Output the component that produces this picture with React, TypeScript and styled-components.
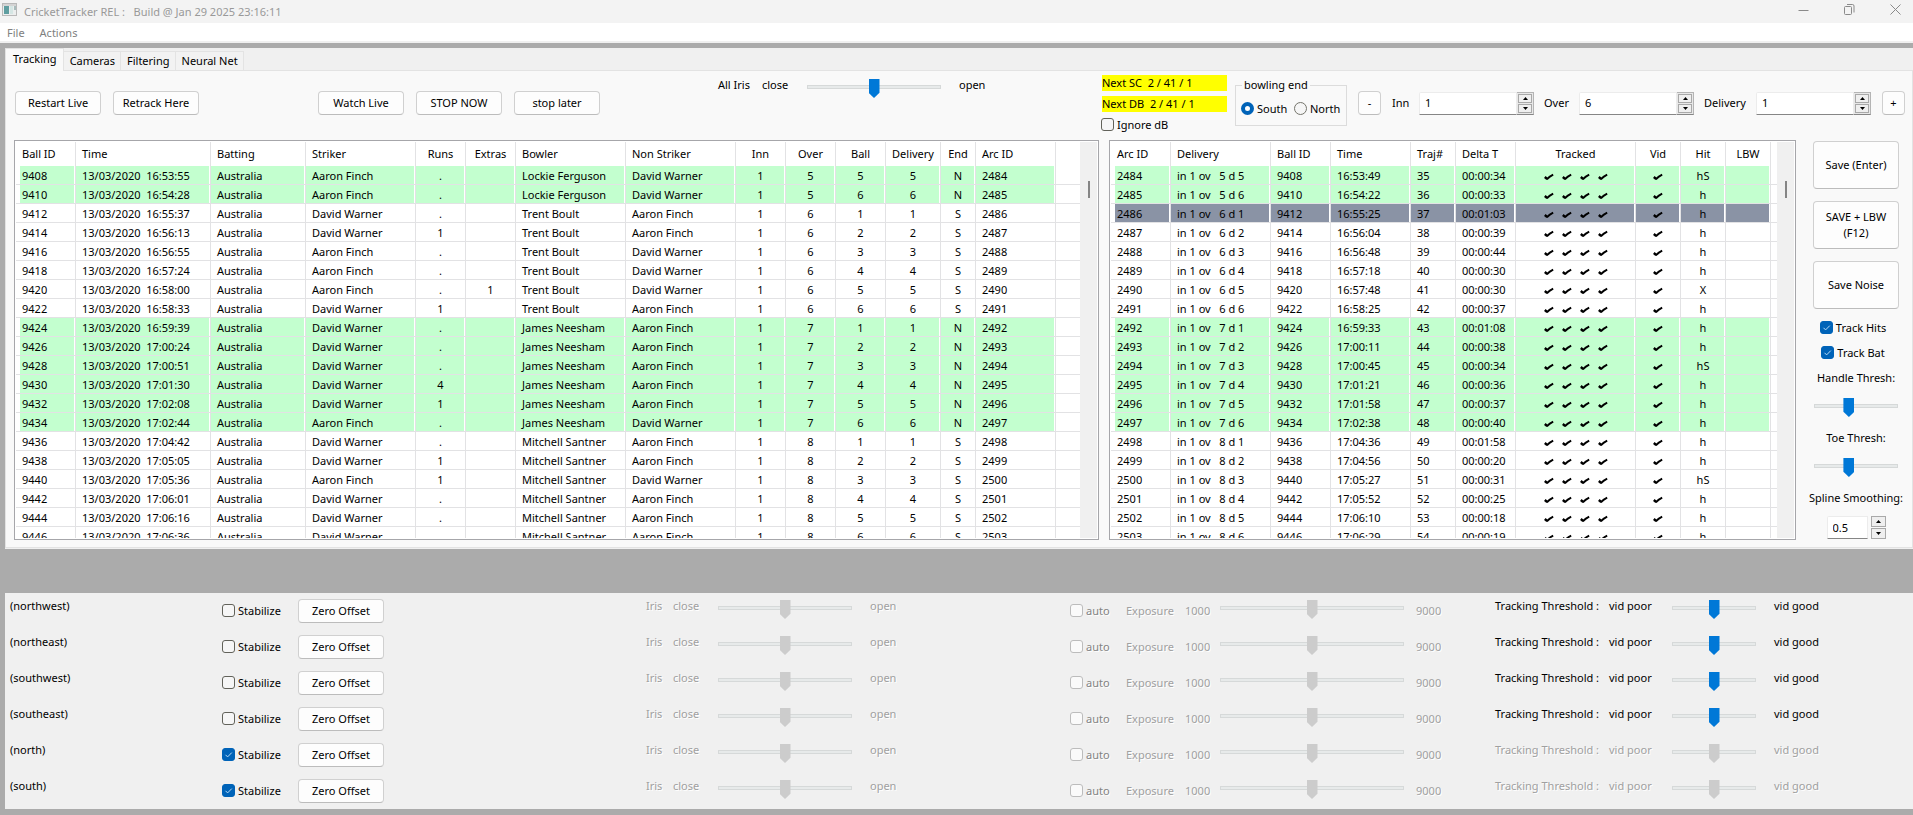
import React from "react";
import styled, { createGlobalStyle, css } from "styled-components";

const GlobalStyle = createGlobalStyle`
  * { box-sizing: border-box; }
  body {
    margin: 0;
    background: #ababab;
    color: #000;
    font: 11px/16px "Noto Sans", "Open Sans", sans-serif;
  }
  button, input { font: inherit; color: inherit; }
`;

const Window = styled.div`
  display: flex;
  flex-direction: column;
  height: 100vh;
  min-width: 1400px;
  padding-bottom: 6px;
`;

const TitleBar = styled.header`
  display: flex;
  align-items: center;
  height: 23px;
  padding: 0 11px 4px 2px;
  background: #f3f3f3;
  color: #999;
  svg { display: block; }
`;

const AppTitle = styled.h1`
  flex: 1;
  margin: 4px 0 0 7px;
  font-size: 11px;
  font-weight: 400;
  white-space: pre;
`;

const CaptionButton = styled.button`
  width: 13px;
  height: 13px;
  margin-left: 33px;
  padding: 0;
  border: 0;
  background: none;
`;

const MenuBar = styled.nav`
  display: flex;
  gap: 15px;
  height: 20px;
  padding: 1px 7px;
  background: #fff;
  border-bottom: 2px solid #f0f0f0;
  color: #808080;
`;

const MenuItem = styled.button`
  padding: 0;
  border: 0;
  background: none;
  line-height: 17px;
`;

const TrackingPanel = styled.main`
  display: flex;
  flex-direction: column;
  flex: 1;
  min-height: 0;
  margin: 5px 0 0 5px;
  background: #f0f0f0;
`;

const TabStrip = styled.div`
  display: flex;
  align-items: flex-end;
  height: 23px;
  box-shadow: inset 0 -1px #e3e3e3;
`;

const Tab = styled.button<{ $active?: boolean }>`
  height: 20px;
  padding: 0 5px 0 6px;
  border: 1px solid #e3e3e3;
  border-left: 0;
  background: #f2f2f2;
  white-space: nowrap;
  ${(p) => p.$active && css`
    height: 23px;
    padding: 0 6px 3px 7px;
    border-left: 1px solid #e3e3e3;
    border-bottom: 0;
    background: #f9f9f9;
  `}
`;

const TabPage = styled.section`
  display: flex;
  flex-direction: column;
  flex: 1;
  min-height: 0;
  margin-bottom: 1px;
  border: 1px solid #e3e3e3;
  border-top: 0;
  background: #f9f9f9;
`;

const Toolbar = styled.div`
  display: flex;
  align-items: flex-start;
  flex: none;
  height: 69px;
  padding: 0 7px 0 9px;
`;

const ButtonGroup = styled.div<{ $gap?: number }>`
  display: flex;
  gap: 12px;
  margin-top: 20px;
  margin-left: ${(p) => p.$gap ?? 0}px;
`;

const PushButton = styled.button<{ $size?: "small" | "tall" }>`
  flex: none;
  width: ${(p) => (p.$size === "small" ? 23 : 86)}px;
  height: ${(p) => (p.$size === "tall" ? 48 : 24)}px;
  padding: 0;
  border: 1px solid #d0d0d0;
  border-bottom-color: #bcbcbc;
  border-radius: 4px;
  background: #fdfdfd;
`;

const Caption = styled.span<{ $w?: number }>`
  flex: none;
  width: ${(p) => (p.$w ? `${p.$w}px` : "auto")};
  white-space: nowrap;
`;

const IrisGroup = styled.div`
  display: flex;
  margin: 6px 0 0 118px;
`;

const Range = styled.input.attrs({ type: "range", min: 0, max: 100 })<{ $w: number; $gap?: number }>`
  appearance: none;
  flex: none;
  width: ${(p) => p.$w}px;
  height: 22px;
  margin: -1px ${(p) => p.$gap ?? 0}px 0 0;
  background: none;
  &::-webkit-slider-runnable-track {
    height: 4px;
    border: 1px solid #d6d9d9;
    background: #e7eaea;
  }
  &::-webkit-slider-thumb {
    appearance: none;
    width: 11px;
    height: 19px;
    margin-top: -7px;
    background: #0078d7;
    clip-path: polygon(0 0, 100% 0, 100% 72%, 50% 100%, 0 72%);
  }
  &:disabled::-webkit-slider-thumb { background: #cccccc; }
`;

const MatchControls = styled.div`
  display: flex;
  align-items: flex-start;
  margin-left: auto;
`;

const NextColumn = styled.div`
  display: flex;
  flex-direction: column;
  gap: 5px;
  width: 126px;
  margin: 4px 8px 0 0;
`;

const NextFlag = styled.div`
  height: 16px;
  margin-left: 1px;
  background: #ffff00;
  white-space: pre;
`;

const TickLabel = styled.label<{ $w?: number; $muted?: boolean }>`
  display: flex;
  align-items: center;
  flex: none;
  gap: 3px;
  width: ${(p) => (p.$w ? `${p.$w}px` : "auto")};
  height: 15px;
  color: ${(p) => (p.$muted ? "#838383" : "inherit")};
  white-space: nowrap;
`;

const TickInput = styled.input`
  appearance: none;
  width: 13px;
  height: 13px;
  margin: 0;
  border: 1px solid #62625a;
  border-radius: 3px;
  background: #f6f6f6;
  &:checked { border-color: #0063b8; background: #0063b8; }
  &:disabled { border-color: #bcbcbc; background: #fafafa; }
`;

const TickHolder = styled.span`
  display: grid;
  flex: none;
  > * { grid-area: 1 / 1; }
  svg { pointer-events: none; }
`;

const RadioInput = styled.input.attrs({ type: "radio" })`
  appearance: none;
  width: 13px;
  height: 13px;
  margin: 0;
  border: 1px solid #75756c;
  border-radius: 50%;
  background: #f6f6f6;
  &:checked { border: 4px solid #0063b8; background: #fff; }
`;

const EndBox = styled.fieldset`
  display: flex;
  width: 112px;
  height: 49px;
  min-width: 0;
  margin: 6px 11px 0 0;
  padding: 8px 0 0 5px;
  border: 1px solid #dcdcdc;
  legend { margin-left: 1px; padding: 0 2px; }
`;

const DeliveryBar = styled.div`
  display: flex;
  align-items: center;
  margin-top: 20px;
`;

const SpinBox = styled.div<{ $detached?: boolean; $gap?: number }>`
  display: flex;
  width: ${(p) => (p.$detached ? 59 : 115)}px;
  height: 23px;
  margin-right: ${(p) => p.$gap ?? 0}px;
  gap: ${(p) => (p.$detached ? 3 : 0)}px;
  input {
    flex: 1;
    min-width: 0;
    padding: 0 5px;
    border: 1px solid #ececec;
    border-bottom-color: #868686;
    border-radius: 2px 0 0 0;
    background: #fff;
  }
`;

const SpinArrows = styled.div<{ $framed?: boolean }>`
  display: flex;
  flex-direction: column;
  justify-content: space-between;
  width: ${(p) => (p.$framed ? 17 : 15)}px;
  padding: ${(p) => (p.$framed ? "1px" : "0")};
  ${(p) => p.$framed && css`
    border: 1px solid #b4b4b4;
    border-left: 0;
    border-bottom-color: #868686;
    background: #e8e8e8;
  `}
  button {
    display: grid;
    place-items: center;
    height: ${(p) => (p.$framed ? 9 : 11)}px;
    padding: 0;
    border: 1px solid #a9a9a9;
    background: #efefef;
  }
`;

const Workspace = styled.div`
  display: grid;
  grid-template-columns: minmax(0, 1085fr) minmax(0, 687fr) 106px;
  grid-template-rows: minmax(0, 1fr);
  column-gap: 10px;
  flex: 1;
  min-height: 0;
  padding: 0 0 7px 8px;
`;

const ListBox = styled.div`
  display: flex;
  min-height: 0;
  padding: 1px;
  border: 1px solid #a6a6aa;
  background: #fff;
`;

const ListView = styled.div`
  flex: 1;
  min-width: 0;
  overflow: hidden;
`;

const ScrollGutter = styled.div`
  display: flex;
  justify-content: center;
  width: 17px;
  padding-top: 39px;
  background: #f0f0f0;
`;

const ScrollThumb = styled.div`
  width: 2px;
  height: 17px;
  background: #858585;
`;

const Grid = styled.table`
  width: 100%;
  table-layout: fixed;
  border-collapse: separate;
  border-spacing: 0;
`;

const HeadCell = styled.th<{ $center?: boolean }>`
  height: 24px;
  padding: 0 0 0 ${(p) => (p.$center ? 0 : 6)}px;
  border-right: 1px solid #e2e2e4;
  font-weight: 400;
  text-align: ${(p) => (p.$center ? "center" : "left")};
  white-space: nowrap;
  &:last-child { border-right: 0; }
`;

const tones = { plain: "#fff", green: "#c3ffcf", selected: "#8a93a5" };
type Tone = keyof typeof tones;

const Row = styled.tr<{ $tone: Tone }>`
  td {
    background: ${(p) => tones[p.$tone]};
    box-shadow: inset -1px 0 #fff;
  }
  td:first-child { box-shadow: inset -1px 0 #fff, inset 4px 0 #fff; }
  td:last-child { border-right: 0; background: #fff; }
`;

const Cell = styled.td<{ $center?: boolean }>`
  height: 19px;
  padding: 1px 0 0 ${(p) => (p.$center ? 0 : 6)}px;
  border-right: 1px solid #e2e2e4;
  border-bottom: 1px solid #e2e2e4;
  line-height: 17px;
  text-align: ${(p) => (p.$center ? "center" : "left")};
  white-space: pre;
`;

const Ticks = styled.span`
  display: flex;
  justify-content: center;
  gap: 8px;
  padding-top: 2px;
`;

const SideBar = styled.aside`
  display: flex;
  flex-direction: column;
  align-items: center;
  padding: 1px 0 0 4px;
  margin-right: 10px;
  white-space: nowrap;
`;

const SideButtons = styled.div`
  display: flex;
  flex-direction: column;
  gap: 12px;
  margin-bottom: 11px;
`;

const SideChecks = styled.div`
  display: flex;
  flex-direction: column;
  align-items: center;
  gap: 10px;
  margin: 0 6px 10px 0;
`;

const SideField = styled.label`
  display: flex;
  flex-direction: column;
  flex: none;
  align-items: center;
  gap: 10px;
  height: 60px;
`;

const CameraPanel = styled.section`
  margin: 44px 0 0 5px;
  background: #f0f0f0;
`;

const CameraRow = styled.div`
  display: grid;
  grid-template-columns: 212fr 424fr 424fr 425fr 418fr;
  height: 36px;
  padding: 5px 0 0 5px;
`;

const CameraGroup = styled.div<{ $muted?: boolean }>`
  display: flex;
  align-items: flex-start;
  ${(p) => p.$muted && css`
    color: #a0a0a0;
    text-shadow: 1px 1px #fff;
  `}
`;

const Lowered = styled.div`
  display: flex;
  margin-top: 5px;
`;

const ButtonSlot = styled.div`
  margin-top: 1px;
`;

function Check({ label, w, checked, disabled }: { label: string; w?: number; checked?: boolean; disabled?: boolean }) {
  return (
    <TickLabel $w={w} $muted={disabled}>
      <TickHolder>
        <TickInput type="checkbox" defaultChecked={checked} disabled={disabled} />
        {checked && (
          <svg width="13" height="13" viewBox="0 0 13 13" fill="none" stroke="#b9dcf7">
            <path d="M3.5 6.8 5.6 8.9 9.8 4.6" />
          </svg>
        )}
      </TickHolder>
      {label}
    </TickLabel>
  );
}

function Spin({ label, value, detached, gap }: { label: string; value: string; detached?: boolean; gap?: number }) {
  return (
    <SpinBox $detached={detached} $gap={gap}>
      <input type="text" aria-label={label} defaultValue={value} />
      <SpinArrows $framed={!detached}>
        <button aria-label={`${label} up`}>
          <svg width="5" height="3" viewBox="0 0 5 3"><path d="M0 3 2.5 0 5 3z" /></svg>
        </button>
        <button aria-label={`${label} down`}>
          <svg width="5" height="3" viewBox="0 0 5 3"><path d="M0 0 2.5 3 5 0z" /></svg>
        </button>
      </SpinArrows>
    </SpinBox>
  );
}

function Ticked({ count }: { count: number }) {
  return (
    <Ticks role="img" aria-label={`${count} tracked`}>
      {Array.from({ length: count }, (_, i) => (
        <svg key={i} width="10" height="8" viewBox="0 0 10 8" fill="none" stroke="#000">
          <path d="M.8 4 3.200 6" strokeWidth="2.400" />
          <path d="M2.800 6.400C4.400 4.600 6.600 2.800 9.200 1.600" strokeWidth="2" />
        </svg>
      ))}
    </Ticks>
  );
}

type Column = { name: string; w?: number; center?: boolean };

const ballColumns: Column[] = [
  { name: "Ball ID", w: 60 },
  { name: "Time", w: 135 },
  { name: "Batting", w: 95 },
  { name: "Striker", w: 110 },
  { name: "Runs", w: 50, center: true },
  { name: "Extras", w: 50, center: true },
  { name: "Bowler", w: 110 },
  { name: "Non Striker", w: 110 },
  { name: "Inn", w: 50, center: true },
  { name: "Over", w: 50, center: true },
  { name: "Ball", w: 50, center: true },
  { name: "Delivery", w: 55, center: true },
  { name: "End", w: 35, center: true },
  { name: "Arc ID", w: 80 },
  { name: "" },
];

const arcColumns: Column[] = [
  { name: "Arc ID", w: 60 },
  { name: "Delivery", w: 100 },
  { name: "Ball ID", w: 60 },
  { name: "Time", w: 80 },
  { name: "Traj#", w: 45 },
  { name: "Delta T", w: 60 },
  { name: "Tracked", w: 120, center: true },
  { name: "Vid", w: 45, center: true },
  { name: "Hit", w: 45, center: true },
  { name: "LBW", w: 45, center: true },
  { name: "" },
];

const FINCH = "Aaron Finch";
const WARNER = "David Warner";

// over, ball, time, striker, runs, extras, arc time, delta, hit
type Ball = [number, number, string, string, string, string, string, string, string];

const balls: Ball[] = [
  [5, 5, "16:53:55", FINCH, ".", "", "16:53:49", "00:00:34", "hS"],
  [5, 6, "16:54:28", FINCH, ".", "", "16:54:22", "00:00:33", "h"],
  [6, 1, "16:55:37", WARNER, ".", "", "16:55:25", "00:01:03", "h"],
  [6, 2, "16:56:13", WARNER, "1", "", "16:56:04", "00:00:39", "h"],
  [6, 3, "16:56:55", FINCH, ".", "", "16:56:48", "00:00:44", "h"],
  [6, 4, "16:57:24", FINCH, ".", "", "16:57:18", "00:00:30", "h"],
  [6, 5, "16:58:00", FINCH, ".", "1", "16:57:48", "00:00:30", "X"],
  [6, 6, "16:58:33", WARNER, "1", "", "16:58:25", "00:00:37", "h"],
  [7, 1, "16:59:39", WARNER, ".", "", "16:59:33", "00:01:08", "h"],
  [7, 2, "17:00:24", WARNER, ".", "", "17:00:11", "00:00:38", "h"],
  [7, 3, "17:00:51", WARNER, ".", "", "17:00:45", "00:00:34", "hS"],
  [7, 4, "17:01:30", WARNER, "4", "", "17:01:21", "00:00:36", "h"],
  [7, 5, "17:02:08", WARNER, "1", "", "17:01:58", "00:00:37", "h"],
  [7, 6, "17:02:44", FINCH, ".", "", "17:02:38", "00:00:40", "h"],
  [8, 1, "17:04:42", WARNER, ".", "", "17:04:36", "00:01:58", "h"],
  [8, 2, "17:05:05", WARNER, "1", "", "17:04:56", "00:00:20", "h"],
  [8, 3, "17:05:36", FINCH, "1", "", "17:05:27", "00:00:31", "hS"],
  [8, 4, "17:06:01", WARNER, ".", "", "17:05:52", "00:00:25", "h"],
  [8, 5, "17:06:16", WARNER, ".", "", "17:06:10", "00:00:18", "h"],
  [8, 6, "17:06:36", WARNER, ".", "", "17:06:29", "00:00:19", "h"],
];

const bowlers: Record<number, string> = {
  5: "Lockie Ferguson",
  6: "Trent Boult",
  7: "James Neesham",
  8: "Mitchell Santner",
};

const toneOf = (over: number): Tone => (over % 2 ? "green" : "plain");

const ballRows = balls.map(([over, ball, time, striker, runs, extras], i) => ({
  tone: toneOf(over),
  cells: [
    9408 + i * 2, `13/03/2020  ${time}`, "Australia", striker, runs, extras, bowlers[over],
    striker === FINCH ? WARNER : FINCH, 1, over, ball, ball, over % 2 ? "N" : "S", 2484 + i, "",
  ] as React.ReactNode[],
}));

const arcRows = balls.map(([over, ball, , , , , time, delta, hit], i) => ({
  tone: i === 2 ? ("selected" as Tone) : toneOf(over),
  cells: [
    2484 + i, `in 1 ov   ${over} d ${ball}`, 9408 + i * 2, time, 35 + i, delta,
    <Ticked count={4} />, <Ticked count={1} />, hit, "", "",
  ] as React.ReactNode[],
}));

function List({ columns, rows }: { columns: Column[]; rows: { tone: Tone; cells: React.ReactNode[] }[] }) {
  return (
    <ListBox>
      <ListView>
        <Grid>
          <colgroup>
            {columns.map((c, i) => <col key={i} width={c.w} />)}
          </colgroup>
          <thead>
            <tr>{columns.map((c, i) => <HeadCell key={i} $center={c.center}>{c.name}</HeadCell>)}</tr>
          </thead>
          <tbody>
            {rows.map((r, i) => (
              <Row key={i} $tone={r.tone}>
                {r.cells.map((cell, j) => <Cell key={j} $center={columns[j].center}>{cell}</Cell>)}
              </Row>
            ))}
          </tbody>
        </Grid>
      </ListView>
      <ScrollGutter><ScrollThumb /></ScrollGutter>
    </ListBox>
  );
}

const cameras = [
  { name: "northwest", stabilize: false, live: true },
  { name: "northeast", stabilize: false, live: true },
  { name: "southwest", stabilize: false, live: true },
  { name: "southeast", stabilize: false, live: true },
  { name: "north", stabilize: true, live: false },
  { name: "south", stabilize: true, live: false },
];

export default function App() {
  return (
    <Window>
      <GlobalStyle />
      <TitleBar>
        <svg width="15" height="13" viewBox="0 0 15 13">
          <rect x=".5" y=".5" width="14" height="12" fill="#eceeee" stroke="#b9b9b9" />
          <rect x="1" y="1" width="13" height="2" fill="#d4d4d4" />
          <rect x="2" y="3" width="5" height="8" fill="#5f9ea0" />
          <rect x="8" y="3" width="3" height="8" fill="#d5e6e4" />
          <rect x="12" y="3" width="2" height="4" fill="#a9bcbc" />
        </svg>
        <AppTitle>CricketTracker REL :   Build @ Jan 29 2025 23:16:11</AppTitle>
        <CaptionButton aria-label="Minimize">
          <svg width="13" height="13" stroke="#8a8a8a"><path d="M1.500 7.500h10" /></svg>
        </CaptionButton>
        <CaptionButton aria-label="Restore">
          <svg width="13" height="13" fill="none" stroke="#8a8a8a">
            <rect x="1.500" y="3.500" width="7" height="8" rx="1" />
            <path d="M4 1.500h5.500a1.500 1.500 0 0 1 1.500 1.500v6.500" />
          </svg>
        </CaptionButton>
        <CaptionButton aria-label="Close">
          <svg width="13" height="13" stroke="#8a8a8a"><path d="M1.500 1.500l10 10M11.500 1.500l-10 10" /></svg>
        </CaptionButton>
      </TitleBar>
      <MenuBar>
        <MenuItem>File</MenuItem>
        <MenuItem>Actions</MenuItem>
      </MenuBar>

      <TrackingPanel>
        <TabStrip role="tablist">
          <Tab role="tab" aria-selected $active>Tracking</Tab>
          <Tab role="tab">Cameras</Tab>
          <Tab role="tab">Filtering</Tab>
          <Tab role="tab">Neural Net</Tab>
        </TabStrip>
        <TabPage>
          <Toolbar>
            <ButtonGroup>
              <PushButton>Restart Live</PushButton>
              <PushButton>Retrack Here</PushButton>
            </ButtonGroup>
            <ButtonGroup $gap={119}>
              <PushButton>Watch Live</PushButton>
              <PushButton>STOP NOW</PushButton>
              <PushButton>stop later</PushButton>
            </ButtonGroup>
            <IrisGroup>
              <Caption $w={44}>All Iris</Caption>
              <Caption $w={45}>close</Caption>
              <Range aria-label="All Iris" $w={134} $gap={18} defaultValue={50} />
              <Caption>open</Caption>
            </IrisGroup>
            <MatchControls>
              <NextColumn>
                <NextFlag>Next SC  2 / 41 / 1</NextFlag>
                <NextFlag>Next DB  2 / 41 / 1</NextFlag>
                <Check label="Ignore dB" />
              </NextColumn>
              <EndBox>
                <legend>bowling end</legend>
                <TickLabel $w={53}><RadioInput name="end" defaultChecked />South</TickLabel>
                <TickLabel><RadioInput name="end" />North</TickLabel>
              </EndBox>
              <DeliveryBar>
                <PushButton $size="small">-</PushButton>
                <Caption $w={11} />
                <Caption $w={27}>Inn</Caption>
                <Spin label="Inn" value="1" gap={10} />
                <Caption $w={35}>Over</Caption>
                <Spin label="Over" value="6" gap={10} />
                <Caption $w={52}>Delivery</Caption>
                <Spin label="Delivery" value="1" gap={11} />
                <PushButton $size="small">+</PushButton>
              </DeliveryBar>
            </MatchControls>
          </Toolbar>

          <Workspace>
            <List columns={ballColumns} rows={ballRows} />
            <List columns={arcColumns} rows={arcRows} />
            <SideBar>
              <SideButtons>
                <PushButton $size="tall">Save (Enter)</PushButton>
                <PushButton $size="tall">SAVE + LBW<br />(F12)</PushButton>
                <PushButton $size="tall">Save Noise</PushButton>
              </SideButtons>
              <SideChecks>
                <Check label="Track Hits" checked />
                <Check label="Track Bat" checked />
              </SideChecks>
              <SideField>Handle Thresh:<Range $w={84} defaultValue={40} /></SideField>
              <SideField>Toe Thresh:<Range $w={84} defaultValue={40} /></SideField>
              <SideField as="div">Spline Smoothing:<Spin label="Spline Smoothing" value="0.5" detached /></SideField>
            </SideBar>
          </Workspace>
        </TabPage>
      </TrackingPanel>

      <CameraPanel>
        {cameras.map((c) => (
          <CameraRow key={c.name}>
            <Caption>({c.name})</Caption>
            <CameraGroup>
              <Lowered><Check label="Stabilize" w={76} checked={c.stabilize} /></Lowered>
              <ButtonSlot><PushButton>Zero Offset</PushButton></ButtonSlot>
            </CameraGroup>
            <CameraGroup $muted>
              <Caption $w={27}>Iris</Caption>
              <Caption $w={45}>close</Caption>
              <Range aria-label={`Iris ${c.name}`} $w={134} $gap={18} defaultValue={50} disabled />
              <Caption>open</Caption>
            </CameraGroup>
            <CameraGroup $muted>
              <Lowered>
                <Check label="auto" w={56} disabled />
                <Caption $w={59}>Exposure</Caption>
                <Caption $w={35}>1000</Caption>
              </Lowered>
              <Range aria-label={`Exposure ${c.name}`} $w={184} $gap={12} defaultValue={50} disabled />
              <Lowered>9000</Lowered>
            </CameraGroup>
            <CameraGroup $muted={!c.live}>
              <Caption $w={114}>Tracking Threshold :</Caption>
              <Caption $w={63}>vid poor</Caption>
              <Range aria-label={`Tracking Threshold ${c.name}`} $w={84} $gap={18} defaultValue={50} disabled={!c.live} />
              <Caption>vid good</Caption>
            </CameraGroup>
          </CameraRow>
        ))}
      </CameraPanel>
    </Window>
  );
}
